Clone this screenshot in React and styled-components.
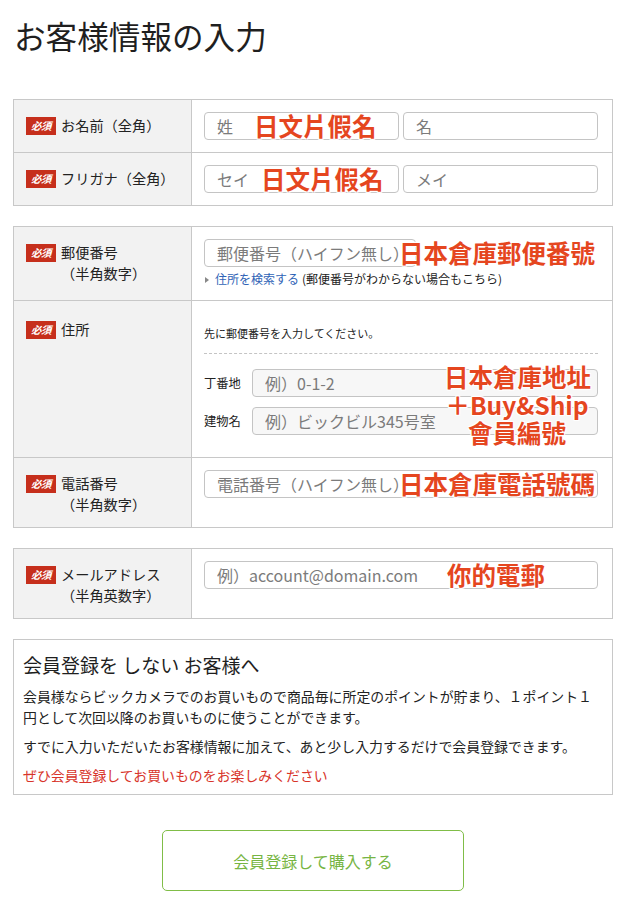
import styled, { createGlobalStyle } from "styled-components";

const GlobalStyle = createGlobalStyle`
  html, body {
    margin: 0;
    padding: 0;
    background: #fff;
  }
  body {
    font-family: "Noto Sans CJK JP", "Noto Sans", sans-serif;
    color: #222;
  }
`;

const Page = styled.div`
  width: 600px;
  margin-left: 13px;
  padding-bottom: 10px;
`;

const Title = styled.h1`
  margin: 14px 0 43px 1px;
  font-size: 31.6px;
  line-height: 42px;
  font-weight: 400;
  color: #1f1f1f;
`;

const Table = styled.div`
  border: 1px solid #c8c8c8;
  margin-bottom: 20px;
`;

const Row = styled.div`
  display: grid;
  grid-template-columns: 178px 1fr;
  & + & {
    border-top: 1px solid #c8c8c8;
  }
`;

const LabelCell = styled.div`
  display: flex;
  align-items: flex-start;
  gap: 5px;
  padding: ${(p) => (p.$low ? "18px" : "15px")} 10px 12px 12px;
  background: #f2f2f2;
  border-right: 1px solid #c8c8c8;
`;

const Badge = styled.span`
  flex: none;
  width: 30px;
  height: 18px;
  margin-top: 1.5px;
  background: #c62f1c;
  color: #fff;
  font-size: 10.5px;
  font-weight: 700;
  font-style: italic;
  line-height: 18px;
  text-align: center;
  letter-spacing: -0.5px;
`;

const LabelText = styled.span`
  font-size: 14.2px;
  line-height: 21px;
  color: #222;
`;

const ValueCell = styled.div`
  padding: 12px 14px 12px 12px;
`;

const Pair = styled.div`
  display: flex;
  gap: 4px;
`;

const Field = styled.div`
  position: relative;
  width: ${(p) => p.$width || "100%"};
  flex: ${(p) => (p.$grow ? "1" : "none")};
`;

const Input = styled.input`
  box-sizing: border-box;
  display: block;
  width: 100%;
  height: 28px;
  padding: 0 12px;
  border: 1px solid #c4c4c4;
  border-radius: 4px;
  background: ${(p) => (p.$muted ? "#f7f7f7" : "#fff")};
  font-family: "Noto Sans CJK JP", "Noto Sans", sans-serif;
  font-size: 16px;
  color: #222;
  outline: none;
  &::placeholder {
    color: #7b7b7b;
  }
`;

const Annotation = styled.span`
  position: absolute;
  left: ${(p) => p.$left}px;
  top: 50%;
  transform: translateY(-50%);
  white-space: nowrap;
  pointer-events: none;
  font-family: "Noto Sans CJK TC", "Noto Sans", sans-serif;
  font-weight: 700;
  font-size: 24.5px;
  line-height: 28px;
  color: #e5461f;
  text-shadow: 1px 1px 0 #fff, -1px -1px 0 #fff, 1px -1px 0 #fff,
    -1px 1px 0 #fff, 0 0 3px #fff;
`;

const AnnotationBlock = styled(Annotation)`
  top: ${(p) => p.$top}px;
  transform: none;
  text-align: center;
  width: 146px;
`;

const SearchLine = styled.div`
  margin-top: 3px;
  font-size: 12px;
  line-height: 18px;
  color: #222;
  white-space: nowrap;
`;

const Arrow = styled.span`
  display: inline-block;
  width: 0;
  height: 0;
  margin: 0 6px 1px 1px;
  border-left: 4px solid #888;
  border-top: 3px solid transparent;
  border-bottom: 3px solid transparent;
`;

const SearchLink = styled.a`
  color: #2f63b6;
  text-decoration: none;
  margin-right: 3px;
`;

const Note = styled.div`
  padding: 12px 0;
  font-size: 11px;
  line-height: 16px;
  color: #222;
  border-bottom: 1px dashed #c4c4c4;
`;

const AddressList = styled.div`
  position: relative;
  display: flex;
  flex-direction: column;
  gap: 10px;
  margin-top: 15px;
  padding-bottom: 10px;
`;

const AddressRow = styled.div`
  display: flex;
  align-items: center;
`;

const AddressLabel = styled.span`
  flex: none;
  width: 48px;
  font-size: 12.3px;
  color: #222;
`;

const InfoBox = styled.section`
  border: 1px solid #c8c8c8;
  padding: 12px 9px 8px;
`;

const InfoTitle = styled.h2`
  margin: 0 0 8px;
  font-size: 19px;
  line-height: 26px;
  font-weight: 400;
  color: #1f1f1f;
`;

const InfoText = styled.p`
  margin: 0 0 8px;
  font-size: 13.9px;
  line-height: 21px;
  color: ${(p) => (p.$accent ? "#d8342a" : "#222")};
  white-space: nowrap;
  &:last-child {
    margin-bottom: 0;
  }
`;

const Actions = styled.div`
  display: flex;
  justify-content: center;
  margin-top: 35px;
`;

const RegisterButton = styled.button`
  width: 302px;
  height: 61px;
  border: 1px solid #80bd48;
  border-radius: 5px;
  background: #fff;
  color: #77b543;
  font-family: "Noto Sans CJK JP", "Noto Sans", sans-serif;
  font-size: 16px;
  cursor: pointer;
`;

export default function App() {
  return (
    <>
      <GlobalStyle />
      <Page>
        <Title>お客様情報の入力</Title>

        <Table>
          <Row>
            <LabelCell>
              <Badge>必須</Badge>
              <LabelText>お名前（全角）</LabelText>
            </LabelCell>
            <ValueCell>
              <Pair>
                <Field $grow>
                  <Input placeholder="姓" />
                  <Annotation $left={50}>日文片假名</Annotation>
                </Field>
                <Field $grow>
                  <Input placeholder="名" />
                </Field>
              </Pair>
            </ValueCell>
          </Row>
          <Row>
            <LabelCell>
              <Badge>必須</Badge>
              <LabelText>フリガナ（全角）</LabelText>
            </LabelCell>
            <ValueCell>
              <Pair>
                <Field $grow>
                  <Input placeholder="セイ" />
                  <Annotation $left={57}>日文片假名</Annotation>
                </Field>
                <Field $grow>
                  <Input placeholder="メイ" />
                </Field>
              </Pair>
            </ValueCell>
          </Row>
        </Table>

        <Table>
          <Row>
            <LabelCell>
              <Badge>必須</Badge>
              <LabelText>
                郵便番号
                <br />
                （半角数字）
              </LabelText>
            </LabelCell>
            <ValueCell>
              <Field $width="212px">
                <Input placeholder="郵便番号（ハイフン無し）" />
                <Annotation $left={195}>日本倉庫郵便番號</Annotation>
              </Field>
              <SearchLine>
                <Arrow />
                <SearchLink href="#">住所を検索する</SearchLink>
                (郵便番号がわからない場合もこちら)
              </SearchLine>
            </ValueCell>
          </Row>
          <Row>
            <LabelCell $low>
              <Badge>必須</Badge>
              <LabelText>住所</LabelText>
            </LabelCell>
            <ValueCell>
              <Note>先に郵便番号を入力してください。</Note>
              <AddressList>
                <AddressRow>
                  <AddressLabel>丁番地</AddressLabel>
                  <Input $muted placeholder="例）0-1-2" />
                </AddressRow>
                <AddressRow>
                  <AddressLabel>建物名</AddressLabel>
                  <Input $muted placeholder="例）ビックビル345号室" />
                </AddressRow>
                <AnnotationBlock $left={240} $top={-6}>
                  日本倉庫地址
                  <br />
                  ＋Buy&amp;Ship
                  <br />
                  會員編號
                </AnnotationBlock>
              </AddressList>
            </ValueCell>
          </Row>
          <Row>
            <LabelCell>
              <Badge>必須</Badge>
              <LabelText>
                電話番号
                <br />
                （半角数字）
              </LabelText>
            </LabelCell>
            <ValueCell>
              <Field>
                <Input placeholder="電話番号（ハイフン無し）" />
                <Annotation $left={195}>日本倉庫電話號碼</Annotation>
              </Field>
            </ValueCell>
          </Row>
        </Table>

        <Table>
          <Row>
            <LabelCell>
              <Badge>必須</Badge>
              <LabelText>
                メールアドレス
                <br />
                （半角英数字）
              </LabelText>
            </LabelCell>
            <ValueCell>
              <Field>
                <Input placeholder="例）account@domain.com" />
                <Annotation $left={243}>你的電郵</Annotation>
              </Field>
            </ValueCell>
          </Row>
        </Table>

        <InfoBox>
          <InfoTitle>会員登録を しない お客様へ</InfoTitle>
          <InfoText>
            会員様ならビックカメラでのお買いもので商品毎に所定のポイントが貯まり、１ポイント１
            <br />
            円として次回以降のお買いものに使うことができます。
          </InfoText>
          <InfoText>
            すでに入力いただいたお客様情報に加えて、あと少し入力するだけで会員登録できます。
          </InfoText>
          <InfoText $accent>ぜひ会員登録してお買いものをお楽しみください</InfoText>
        </InfoBox>

        <Actions>
          <RegisterButton type="button">会員登録して購入する</RegisterButton>
        </Actions>
      </Page>
    </>
  );
}
